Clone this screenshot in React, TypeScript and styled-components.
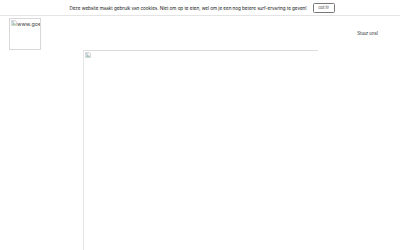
import React from 'react';
import styled, { createGlobalStyle } from 'styled-components';

const GlobalStyle = createGlobalStyle`
  html, body {
    margin: 0;
    padding: 0;
    background: #ffffff;
    font-family: 'Inter', 'Noto Sans', sans-serif;
    color: #333;
  }
`;

const CookieBar = styled.div`
  height: 16px;
  display: flex;
  align-items: center;
  justify-content: center;
  gap: 6px;
  border-bottom: 1px solid #e4e4e4;
  box-sizing: border-box;
  padding-left: 4px;
`;

const CookieText = styled.span`
  font-size: 4.65px;
  letter-spacing: -0.05px;
  color: #222;
  white-space: nowrap;
`;

const GotIt = styled.button`
  font-family: inherit;
  font-size: 3.8px;
  color: #333;
  background: #fff;
  border: 0.8px solid #777;
  border-radius: 1.5px;
  width: 22px;
  height: 10px;
  padding: 0;
  cursor: pointer;
`;

const Header = styled.div`
  display: flex;
  align-items: center;
  justify-content: space-between;
  padding: 1px 22px 0 9px;
  height: 34px;
  box-sizing: border-box;
`;

const LogoBox = styled.div`
  width: 32px;
  height: 32px;
  box-sizing: border-box;
  border: 1px solid #d8d8d8;
  overflow: hidden;
  display: flex;
  align-items: flex-start;
  font-size: 5.4px;
  color: #444;
  white-space: nowrap;
  padding: 1px 0 0 1px;
  line-height: 6px;
  svg {
    flex-shrink: 0;
    display: block;
  }
`;

const Alt = styled.span`
  margin-top: 1px;
`;

const SendLink = styled.a`
  font-size: 4.3px;
  color: #222;
  text-decoration: none;
`;

const Main = styled.div`
  display: flex;
  justify-content: center;
`;

const Hero = styled.div`
  width: 235px;
  height: 200px;
  box-sizing: border-box;
  border-top: 1px solid #dcdcdc;
  border-left: 1px solid #e6e6e6;
  padding: 1px;
  line-height: 0;
  svg {
    display: block;
  }
`;

const BrokenIcon = () => (
  <svg width="6" height="6" viewBox="0 0 16 16">
    <path d="M1 1h10l4 4v10H1z" fill="#f4f4f4" stroke="#999" strokeWidth="1" />
    <path d="M3 12l3-4 2 3 2-2 3 3z" fill="#4a9a5a" />
    <circle cx="5" cy="5" r="1.5" fill="#5a8ad0" />
  </svg>
);

const App: React.FC = () => {
  return (
    <>
      <GlobalStyle />
      <CookieBar>
        <CookieText>
          Deze website maakt gebruik van cookies. Niet om op te eten, wel om je een nog betere surf-ervaring te geven!
        </CookieText>
        <GotIt>Got it!</GotIt>
      </CookieBar>
      <Header>
        <LogoBox>
          <BrokenIcon />
          <Alt>www.goe</Alt>
        </LogoBox>
        <SendLink href="#">Stuur ons!</SendLink>
      </Header>
      <Main>
        <Hero>
          <BrokenIcon />
        </Hero>
      </Main>
    </>
  );
};

export default App;
